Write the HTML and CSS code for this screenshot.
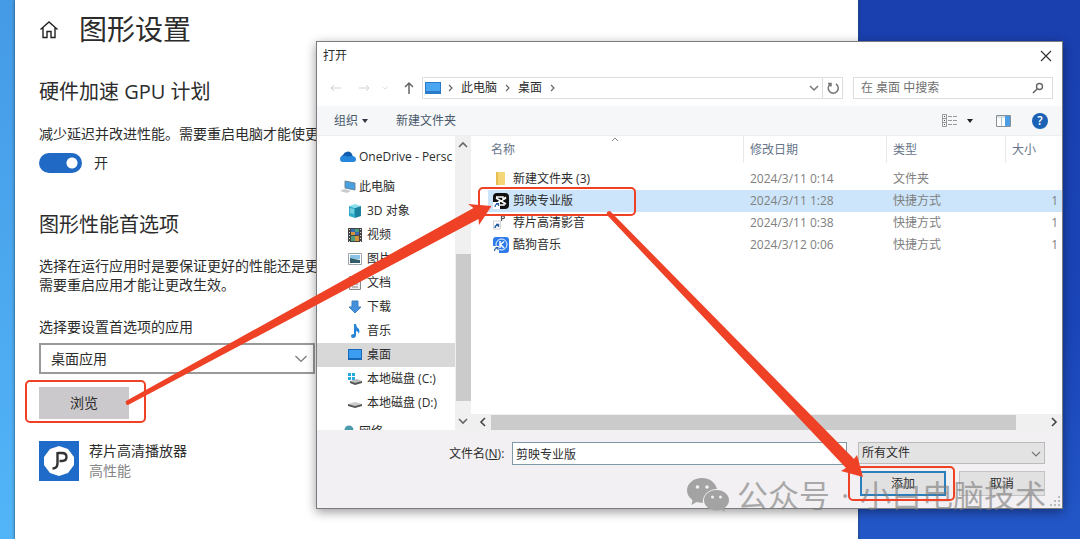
FILE: index.html
```html
<!DOCTYPE html>
<html lang="zh-CN">
<head>
<meta charset="utf-8">
<title>图形设置</title>
<link rel="stylesheet" href="styles.css">
</head>
<body>
<main class="desktop">
  <section class="settings">
    <header class="settings-head">
      <svg class="home" viewBox="0 0 20 20" width="20" height="20"><path d="M1.500 10.500 10 3l8.500 7.500M4 9v9.500h4v-6h4v6h4V9" fill="none" stroke="#222" stroke-width="1.400"/></svg>
      <h1>图形设置</h1>
    </header>
    <h2>硬件加速 GPU 计划</h2>
    <p class="gpu-text">减少延迟并改进性能。需要重启电脑才能使更</p>
    <label class="switch"><input type="checkbox" checked><span>开</span></label>
    <h2 class="pref-title">图形性能首选项</h2>
    <p class="pref-text">选择在运行应用时是要保证更好的性能还是更<br>需要重启应用才能让更改生效。</p>
    <label class="field-label" for="app-type">选择要设置首选项的应用</label>
    <div class="select-box">
      <select id="app-type"><option>桌面应用</option></select>
      <svg class="chevron" viewBox="0 0 12 8" width="12" height="8"><path d="M0.500 1 6 6.500 11.500 1" fill="none" stroke="#777" stroke-width="1.200"/></svg>
    </div>
    <button class="browse" type="button">浏览</button>
    <div class="app">
      <svg viewBox="0 0 40 40" width="40" height="40"><path fill="#1f6bc9" d="M0 0h40v40H0z"/><path fill="#fff" d="m20 5 9 3 6 8v8l-6 8-9 3-9-3-6-8v-8l6-8z"/><path d="M18.500 11v11q0 5.500-5 5.500M19 12h4q4.500 0 4.500 4T23 20h-2.500" fill="none" stroke="#333" stroke-width="2.400"/></svg>
      <div><div class="app-name">荐片高清播放器</div><div class="app-mode">高性能</div></div>
    </div>
  </section>

  <section class="dialog" aria-label="打开">
    <header class="titlebar">
      <span>打开</span>
      <button type="button" class="plain" aria-label="关闭"><svg viewBox="0 0 12 12" width="12" height="12"><path d="m1 1 10 10M11 1 1 11" stroke="#333" stroke-width="1.200"/></svg></button>
    </header>

    <div class="navrow">
      <div class="history">
        <svg viewBox="0 0 12 12" width="12" height="12"><path d="M11 6H1m3-3L1 6l3 3" fill="none" stroke="#d2d2d2"/></svg>
        <svg viewBox="0 0 12 12" width="12" height="12"><path d="M1 6h10M8 3l3 3-3 3" fill="none" stroke="#d2d2d2"/></svg>
        <svg viewBox="0 0 6 6" width="6" height="6"><path d="m0.500 2 2.500 2 2.500-2" fill="none" stroke="#ddd"/></svg>
        <svg class="up" viewBox="0 0 12 14" width="12" height="14"><path d="M6 13V2M2 6l4-4 4 4" fill="none" stroke="#666" stroke-width="1.500"/></svg>
      </div>
      <div class="address">
        <svg viewBox="0 0 16 12" width="16" height="12"><path fill="#2a7ac8" d="M0 0h16v12H0z"/><path fill="#4aa6f0" d="M1 1h14v8H1z"/></svg>
        <svg class="sep" viewBox="0 0 6 8" width="6" height="8"><path d="m1 1 3 3-3 3" fill="none" stroke="#666" stroke-width="1.200"/></svg>
        <span>此电脑</span>
        <svg class="sep" viewBox="0 0 6 8" width="6" height="8"><path d="m1 1 3 3-3 3" fill="none" stroke="#666" stroke-width="1.200"/></svg>
        <span>桌面</span>
        <svg class="sep" viewBox="0 0 6 8" width="6" height="8"><path d="m1 1 3 3-3 3" fill="none" stroke="#666" stroke-width="1.200"/></svg>
        <svg class="drop" viewBox="0 0 10 8" width="10" height="8"><path d="m1 2 4 4 4-4" fill="none" stroke="#777" stroke-width="1.500"/></svg>
        <button type="button" class="plain refresh" aria-label="刷新"><svg viewBox="0 0 14 14" width="14" height="14"><path d="M4.500 3a5 5 0 1 0 5.500 0M2 2.500h3v3" fill="none" stroke="#777" stroke-width="1.500"/></svg></button>
      </div>
      <div class="search">
        <input type="text" aria-label="搜索" placeholder="在 桌面 中搜索">
        <svg viewBox="0 0 12 12" width="12" height="12"><circle cx="7.500" cy="4.500" r="3" fill="none" stroke="#666" stroke-width="1.400"/><path d="M5.300 6.700 1 11" stroke="#666" stroke-width="1.600"/></svg>
      </div>
    </div>

    <div class="toolbar">
      <button type="button" class="plain organize">组织 <svg viewBox="0 0 6 4" width="6" height="4"><path fill="#334" d="M0 0h6L3 4z"/></svg></button>
      <button type="button" class="plain">新建文件夹</button>
      <span class="tools">
        <svg viewBox="0 0 15 14" width="15" height="14"><path d="M.5.500h4v12h-4zM.5 4.500h4m-4 4h4" fill="none" stroke="#999"/><path d="M2 2.500h1M2 6.500h1M2 10.500h1" stroke="#555"/><path d="M6 2.500h9M6 6.500h9M6 10.500h9" stroke="#999" stroke-dasharray="4 1"/></svg>
        <svg class="caret" viewBox="0 0 6 4" width="6" height="4"><path fill="#222" d="M0 0h6L3 4z"/></svg>
        <svg class="pane" viewBox="0 0 15 12" width="15" height="12"><path d="M.5.500h14v11H.5z" fill="#fff" stroke="#879096"/><path d="M1 2h8M5.500 2v9" stroke="#b7c6ce"/><path fill="#4c9de4" d="M9 1h5v10H9z"/></svg>
        <button type="button" class="help" aria-label="帮助">?</button>
      </span>
    </div>

    <div class="content">
      <nav class="tree">
        <ul>
          <li class="root"><a href="#"><svg viewBox="0 0 16 12" width="16" height="12"><path fill="#0f5cae" d="M2 9a3 3 0 0 1 1-5 5 5 0 0 1 9-1l1 3z"/><path fill="#2587dc" d="M3 11a3 3 0 0 1 0-6q2-1 4 .500L12 5q4 0 4 3.500Q16 11 13 11z"/></svg>OneDrive - Persc</a></li>
          <li class="root gap"><a href="#"><svg viewBox="0 0 16 14" width="16" height="14"><path fill="#48a0e0" d="m5 1 10 2v7L5 8z"/><path d="m5 1 10 2v7L5 8z" fill="none" stroke="#6f8797"/><path fill="#c7ccd0" d="m0 11 4-2 7 2-4 2z"/></svg>此电脑</a></li>
          <li><a href="#"><svg viewBox="0 0 14 14" width="14" height="14"><path fill="#8be0ee" d="m7 0 6 2-6 2-6-2z"/><path fill="#30aec9" d="m1 2 6 2v10l-6-2z"/><path fill="#1c809f" d="m13 2-6 2v10l6-2z"/><path fill="#75cede" d="m2 4 4 1v5l-4-1z"/></svg>3D 对象</a></li>
          <li><a href="#"><svg viewBox="0 0 14 14" width="14" height="14"><path fill="#444" d="M0 0h14v14H0z"/><path d="M1.500 1v13M12.500 1v13" stroke="#ddd" stroke-dasharray="1 2"/><path fill="#386bb0" d="M3 1h8v6H3z"/><path fill="#d4923b" d="M3 4h4v3H3zm4 4h4v5H7z"/><path fill="#4c9d7b" d="M7 1h4v3H7zM3 8h4v5H3z"/></svg>视频</a></li>
          <li><a href="#"><svg viewBox="0 0 14 12" width="14" height="12"><path fill="#fff" stroke="#9ba4aa" d="M.5.500h13v11H.5z"/><path fill="#8bc2e7" d="M2 2h10v4H2z"/><path fill="#315c68" d="m2 5 4 1 6 1v3H2z"/></svg>图片</a></li>
          <li><a href="#"><svg viewBox="0 0 14 14" width="14" height="14"><path fill="#eee" stroke="#888" d="M1.500.500h8l3 3v10h-11z"/><path d="M4 5h6M4 8h6M4 11h6" stroke="#888"/></svg>文档</a></li>
          <li><a href="#"><svg viewBox="0 0 14 14" width="14" height="14"><path fill="#4590dc" stroke="#3a80c4" d="M4 1h6v6h3l-6 6-6-6h3z"/></svg>下载</a></li>
          <li><a href="#"><svg viewBox="0 0 14 14" width="14" height="14"><path fill="#2785d8" d="M6 0h2q0 3 3 5 1 2 0 5-1-3-3-3v4q0 3-3 3-2 0-2-2 0-2 3-2z"/></svg>音乐</a></li>
          <li class="current"><a href="#"><svg viewBox="0 0 14 12" width="14" height="12"><path fill="#1769b7" d="M0 0h14v11H0z"/><path fill="#3b9cf0" d="M1 1h12v8H1z"/></svg>桌面</a></li>
          <li><a href="#"><svg viewBox="0 0 14 12" width="14" height="12"><path fill="#25a9df" d="M0 0h3v3H0zm4 0h3v3H4zM0 4h3v3H0zm4 0h3v3H4z"/><path fill="#bbb" d="m2 8 7-2 5 2-7 3z"/><path fill="#555" d="m2 8 5 2 7-2v2l-7 2-5-2z"/></svg>本地磁盘 (C:)</a></li>
          <li><a href="#"><svg viewBox="0 0 14 12" width="14" height="12"><path fill="#ccc" d="m0 7 7-2 7 2-7 2z"/><path fill="#555" d="m0 7 7 2 7-2v2l-7 2-7-2z"/></svg>本地磁盘 (D:)</a></li>
          <li class="root last"><a href="#"><svg viewBox="0 0 16 14" width="16" height="14"><circle cx="9" cy="5" r="4.500" fill="#4a9cab"/></svg>网络</a></li>
        </ul>
      </nav>
      <div class="vbar">
        <svg viewBox="0 0 10 8" width="10" height="8"><path d="m1 6 4-4 4 4" fill="none" stroke="#666" stroke-width="1.600"/></svg>
        <span class="vthumb"></span>
        <svg viewBox="0 0 10 8" width="10" height="8"><path d="m1 2 4 4 4-4" fill="none" stroke="#666" stroke-width="1.600"/></svg>
      </div>
      <div class="files">
        <table>
          <colgroup><col class="c-name"><col class="c-date"><col class="c-type"><col></colgroup>
          <thead><tr><th>名称<svg class="sort" viewBox="0 0 8 5" width="8" height="5"><path d="m1 4 3-3 3 3" fill="none" stroke="#888"/></svg></th><th>修改日期</th><th>类型</th><th>大小</th></tr></thead>
          <tbody>
            <tr><td><span class="file"><svg viewBox="0 0 16 16" width="16" height="16"><path fill="#f5d778" d="M3 1h9v13H3z"/><path fill="#e6bd50" d="M3 1h2v13H3z"/></svg>新建文件夹 (3)</span></td><td>2024/3/11 0:14</td><td>文件夹</td><td></td></tr>
            <tr class="selected"><td><span class="file"><svg viewBox="0 0 16 16" width="16" height="16"><rect width="16" height="16" rx="4" fill="#111"/><path d="M3 4h7v2l3-2M3 5l10 6M13 5 4 10M6 12h5v-2" fill="none" stroke="#fff" stroke-width="1.500"/><path fill="#fff" d="M0 9h7v7H0z"/><path d="M2 14q0-3 3-3M3 10.500h2.500V13" fill="none" stroke="#2a62a6" stroke-width="1.200"/></svg>剪映专业版</span></td><td>2024/3/11 1:28</td><td>快捷方式</td><td>1</td></tr>
            <tr><td><span class="file"><svg viewBox="0 0 16 16" width="16" height="16"><path d="M8.500 6V1H10q1.500 0 1.500 1.300T10 3.600H8.500" fill="none" stroke="#555" stroke-width="1.200"/><path fill="#fff" stroke="#aaa" stroke-width=".5" d="M.5 6h7v8h-7z"/><path d="M2 13q0-3 3-3M3 9.500h2.500V12" fill="none" stroke="#2a62a6" stroke-width="1.400"/></svg>荐片高清影音</span></td><td>2024/3/11 0:38</td><td>快捷方式</td><td>1</td></tr>
            <tr><td><span class="file"><svg viewBox="0 0 16 16" width="16" height="16"><rect width="16" height="16" rx="3" fill="#2d7bea"/><circle cx="8.500" cy="7.500" r="5.500" fill="none" stroke="#fff"/><path d="M7 4v7M11 4.500 7.500 7.500 11 11" fill="none" stroke="#fff" stroke-width="1.500"/><path fill="#fff" d="M0 9h6v7H0z"/><path d="M1.500 14q0-3 3-3M2.500 10.500H5V13" fill="none" stroke="#2a62a6" stroke-width="1.200"/></svg>酷狗音乐</span></td><td>2024/3/12 0:06</td><td>快捷方式</td><td>1</td></tr>
          </tbody>
        </table>
        <div class="hbar">
          <svg viewBox="0 0 8 10" width="8" height="10"><path d="M6 1 2 5l4 4" fill="none" stroke="#444" stroke-width="1.600"/></svg>
          <span class="hthumb"></span>
          <svg viewBox="0 0 8 10" width="8" height="10"><path d="m2 1 4 4-4 4" fill="none" stroke="#444" stroke-width="1.600"/></svg>
        </div>
      </div>
    </div>

    <footer class="foot">
      <div class="foot-row">
        <label for="filename">文件名(<u>N</u>):</label>
        <input id="filename" type="text" value="剪映专业版">
        <div class="type-box">
          <select aria-label="文件类型"><option>所有文件</option></select>
          <svg class="chevron" viewBox="0 0 10 8" width="10" height="8"><path d="m1 2 4 4 4-4" fill="none" stroke="#777" stroke-width="1.200"/></svg>
        </div>
      </div>
      <div class="foot-row buttons">
        <button type="button" class="action primary">添加</button>
        <button type="button" class="action">取消</button>
      </div>
      <svg class="grip" viewBox="0 0 10 10" width="10" height="10"><path fill="#bbb" d="M8 0h2v2H8zM4 4h2v2H4zm4 0h2v2H8zM0 8h2v2H0zm4 0h2v2H4zm4 0h2v2H8z"/></svg>
    </footer>
  </section>

  <div class="watermark">
    <svg viewBox="0 0 42 34" width="42" height="34"><path fill="#a3a3a3" d="M15 0C6.500 0 0 5.500 0 12.500c0 4 2 7 5.500 9.500L4.500 27l5-3q3 1 6.500.800C15 17 22 11 30 11 28.500 4.500 22.500 0 15 0z"/><path fill="#a3a3a3" d="M29.500 12C22.500 12 17 16.500 17 22.200s5.500 10.300 12.500 10.300q2.500 0 4.500-.700l4 2-1-3.500c3-2 5-4.800 5-8.100C42 16.500 36.500 12 29.500 12z"/><g fill="#f2f1f2"><circle cx="10.500" cy="9" r="1.800"/><circle cx="20" cy="9" r="1.800"/><circle cx="25.500" cy="19" r="1.500"/><circle cx="33.500" cy="19" r="1.500"/></g></svg>
    <span>公众号</span><span class="dot">·</span><span>小白电脑技术</span>
  </div>

  <svg class="marks" viewBox="0 0 1080 539" width="1080" height="539">
    <g fill="none" stroke="#ee4126" stroke-width="2">
      <rect x="26" y="381" width="119" height="41" rx="4"/>
      <rect x="479" y="188" width="156" height="27" rx="4"/>
      <rect x="849" y="467" width="105" height="33" rx="4"/>
    </g>
    <g fill="#ee4126">
      <path d="M126 401 473.500 208 468 204l23.500 2L479 225l-.500-6L128 405q-3 0-2-4z"/>
      <path d="m610 211 244 248 3-4 6 22-22-6 5-3L607 215q-1-4 3-4z"/>
    </g>
  </svg>
</main>
</body>
</html>
```

FILE: styles.css
```css
* { box-sizing: border-box; }
body {
  margin: 0;
  font-family: "Open Sans", "Noto Sans CJK SC", sans-serif;
  font-size: 12px;
  line-height: 20px;
  color: #2c2c2c;
}
button, input, select { font: inherit; color: inherit; margin: 0; }
svg { flex: none; display: block; }
h1, h2, p, ul { margin: 0; padding: 0; font-weight: 400; }
.plain { background: none; border: 0; padding: 0; }

.desktop {
  position: relative;
  min-height: 100vh;
  overflow: hidden;
  background: linear-gradient(#459ae6, #52b5f8) left / 16px 100% no-repeat,
    linear-gradient(#1a3fae, #1a45b8 60%, #2357c8);
}

/* Settings window */
.settings {
  position: absolute;
  inset: 0 222px 0 15px;
  padding: 8px 24px;
  background: #fff;
  box-shadow: 0 0 3px #245;
}
.settings-head { display: flex; align-items: center; gap: 20px; height: 42px; }
h1 { font-size: 28px; line-height: 42px; }
h2 { font-size: 20px; line-height: 28px; margin-top: 28px; }
.settings p, .switch, .field-label, .app-name, .app-mode, .browse, .select-box { font-size: 14px; }
.gpu-text { margin-top: 18px; }
.switch { display: flex; align-items: center; gap: 12px; margin-top: 9px; }
.switch input {
  appearance: none;
  margin: 0;
  width: 43px;
  height: 20px;
  border-radius: 10px;
  background: radial-gradient(circle at 33px 10px, #fff 5px, transparent 6px), #2069c4;
}
.pref-title { margin-top: 38px; }
.pref-text { margin-top: 17px; line-height: 19px; }
.field-label { display: block; margin-top: 23px; }
.select-box { position: relative; width: 276px; margin-top: 6px; }
.select-box select {
  appearance: none;
  width: 100%;
  height: 31px;
  padding: 0 10px;
  border: 2px solid #999;
  border-radius: 0;
  background: #fff;
}
.chevron { position: absolute; right: 8px; top: 50%; margin-top: -4px; pointer-events: none; }
.browse {
  display: block;
  width: 90px;
  height: 32px;
  margin-top: 13px;
  border: 0;
  background: #cbc9cb;
}
.app { display: flex; gap: 10px; margin-top: 22px; }
.app-mode { color: #858585; }

/* Open dialog */
.dialog {
  position: absolute;
  left: 316px;
  right: 17px;
  top: 41px;
  border: 1px solid #7b7b80;
  background: #fff;
  box-shadow: 0 3px 10px rgba(0, 0, 0, .4);
}
.titlebar { display: flex; justify-content: space-between; align-items: center; height: 28px; padding: 0 10px 0 6px; }
.navrow { display: flex; height: 36px; padding: 7px 9px 7px 13px; }
.history { display: flex; align-items: center; gap: 16px; width: 92px; }
.history svg:nth-child(3) { margin-left: -4px; }
.history .up { margin-left: -1px; }
.address { display: flex; align-items: center; flex: 1; gap: 7px; padding-left: 2px; border: 1px solid #dedede; }
.address span { margin-right: 1px; }
.drop { margin-left: auto; }
.refresh { display: grid; place-items: center; width: 20px; height: 20px; margin-left: -4px; border-left: 1px solid #dedede; }
.search { display: flex; align-items: center; width: 200px; margin-left: 10px; padding: 0 8px 0 7px; border: 1px solid #dedede; }
.search input { flex: 1; min-width: 0; height: 20px; padding: 0; border: 0; background: none; outline: 0; }
.search input::placeholder { color: #707070; opacity: 1; }
.toolbar {
  display: flex;
  align-items: center;
  gap: 28px;
  height: 30px;
  padding: 0 14px 0 17px;
  border-bottom: 1px solid #eceef0;
  background: #f5f7f8;
  color: #4a586c;
}
.organize { display: flex; align-items: center; gap: 4px; }
.tools { display: flex; align-items: center; margin-left: auto; }
.caret { margin-left: 10px; }
.pane { margin: 0 21px 0 23px; }
.help { width: 16px; height: 16px; padding: 0; border: 0; border-radius: 8px; background: #1b61b5; color: #fff; line-height: 16px; font-weight: 600; }

.content { display: flex; height: 294px; }
.tree { width: 138px; overflow: hidden; padding-top: 9px; }
.tree ul { list-style: none; }
.tree li { height: 24px; padding-left: 31px; }
.tree .root { padding-left: 23px; }
.tree .gap { margin-top: 6px; }
.tree .last { margin-top: 5px; }
.tree .current { background: #d9d8d9; }
.tree a { display: flex; align-items: center; gap: 5px; height: 24px; color: inherit; text-decoration: none; white-space: nowrap; }
.tree .root a { gap: 3px; }
.vbar { display: flex; flex-direction: column; align-items: center; justify-content: space-between; width: 16px; padding: 5px 0; background: #f0f0f0; }
.vthumb { width: 15px; height: 147px; margin-top: 89px; background: #cbcbcb; }
.files { display: flex; flex-direction: column; justify-content: space-between; flex: 1; min-width: 0; }
table { width: 100%; table-layout: fixed; border-collapse: separate; border-spacing: 0; }
.c-name { width: 273px; }
.c-date { width: 143px; }
.c-type { width: 119px; }
th { position: relative; height: 27px; padding: 0 0 0 6px; border-right: 1px solid #e8e8e8; text-align: left; font-weight: 400; color: #66748a; }
th:first-child { padding-left: 20px; }
th:last-child { border: 0; }
.sort { position: absolute; left: 140px; top: 1px; }
thead::after { content: ""; display: block; height: 5px; }
td { height: 22px; padding: 0 0 0 6px; color: #808080; }
td:first-child { padding-left: 22px; color: #2c2c2c; }
td:last-child { padding-right: 4px; text-align: right; }
.selected td { background: #cce5fa; }
.selected td:first-child { background: linear-gradient(to right, #fff 17px, #cce5fa 17px); }
.file { display: flex; align-items: center; gap: 4px; }
.hbar { display: flex; align-items: center; height: 16px; padding: 0 4px 0 8px; background: #f0f0f0; }
.hthumb { flex: 1; height: 15px; margin: 0 34px 0 4px; background: #cbcbcb; }

.foot { position: relative; padding: 12px 17px 12px; background: #f2f0f2; }
.foot-row { display: flex; justify-content: flex-end; }
.foot-row label { width: 63px; line-height: 23px; }
.foot-row input { flex: 0 0 335px; width: 335px; height: 23px; padding: 0 3px; border: 1px solid #8099a8; background: #fff; }
.type-box { position: relative; width: 187px; margin-left: 11px; }
.type-box select { appearance: none; width: 100%; height: 22px; padding: 0 3px; border: 1px solid #bbb; border-radius: 0; background: #e4e3e4; }
.type-box .chevron { right: 4px; }
.buttons { gap: 13px; margin-top: 6px; }
.action { width: 86px; height: 25px; padding: 0; border: 1px solid #c4c4c4; background: #e2e1e2; }
.primary { border: 2px solid #2b7fbc; }
.grip { position: absolute; right: 2px; bottom: 2px; }

/* Overlays */
.watermark {
  position: absolute;
  left: 687px;
  top: 474px;
  display: flex;
  align-items: center;
  height: 42px;
  font-size: 31px;
  line-height: 42px;
  color: rgba(120, 120, 120, .6);
  white-space: nowrap;
}
.watermark svg { margin-right: 8px; }
.dot { width: 30px; text-align: center; }
.marks { position: absolute; left: 0; top: 0; pointer-events: none; }
```
